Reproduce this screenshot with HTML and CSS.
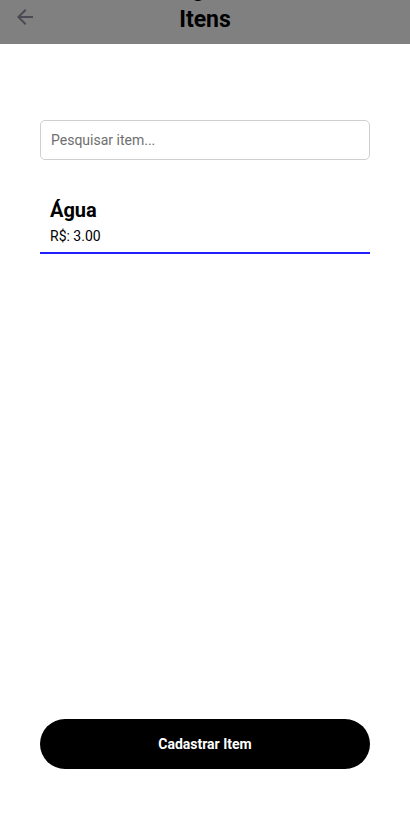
FILE: index.html
```html
<!DOCTYPE html>
<html lang="pt-BR">
<head>
<meta charset="utf-8">
<title>Itens</title>
<link rel="stylesheet" href="styles.css">
</head>
<body>
<div class="screen">
  <header class="header">
    <button class="back" aria-label="Voltar">
      <svg width="24" height="24" viewBox="0 0 24 24"><path d="M20 11H7.83l5.59-5.59L12 4l-8 8 8 8 1.41-1.41L7.83 13H20v-2z" fill="#4a4a55"/></svg>
    </button>
    <h1 class="title">Listagem de<br>Itens</h1>
  </header>
  <main class="content">
    <input class="search" type="text" placeholder="Pesquisar item...">
    <div class="item">
      <div class="item-name">Água</div>
      <div class="item-price">R$: 3.00</div>
    </div>
  </main>
  <div class="footer">
    <button class="primary">Cadastrar Item</button>
  </div>
</div>
</body>
</html>
```
FILE: styles.css
```css
* { box-sizing: border-box; }
html, body { margin: 0; padding: 0; background: #fff; }
body { font-family: Roboto, "Noto Sans", sans-serif; color: #000; }
.screen { display: flex; flex-direction: column; min-height: 837px; }
.header {
  position: relative;
  height: 44px;
  background: #808080;
  overflow: hidden;
  display: flex;
  justify-content: center;
  align-items: flex-end;
}
.back {
  position: absolute;
  left: 13px;
  top: 5px;
  width: 24px;
  height: 24px;
  padding: 0;
  border: 0;
  background: none;
  display: flex;
}
.title {
  margin: 0 0 9px;
  font-size: 23px;
  font-weight: 700;
  line-height: 31px;
  text-align: center;
}
.content { padding: 76px 40px 0; display: flex; flex-direction: column; }
.search {
  height: 40px;
  border: 1px solid #cfcfcf;
  border-radius: 5px;
  padding: 0 10px;
  font-family: Roboto, sans-serif;
  font-size: 14px;
  color: #000;
  outline: none;
}
.search::placeholder { color: #6e6e6e; }
.item {
  margin-top: 29px;
  padding: 7px 10px 7px;
  border-bottom: 2px solid #2020ff;
}
.item-name { font-size: 20px; font-weight: 700; line-height: 28px; }
.item-price { font-size: 14px; line-height: 18px; margin-top: 3px; }
.footer { margin-top: auto; padding: 0 40px 68px; }
.primary {
  width: 100%;
  height: 50px;
  border: 0;
  border-radius: 25px;
  background: #000;
  color: #fff;
  font-family: Roboto, sans-serif;
  font-size: 14px;
  font-weight: 700;
}
```
